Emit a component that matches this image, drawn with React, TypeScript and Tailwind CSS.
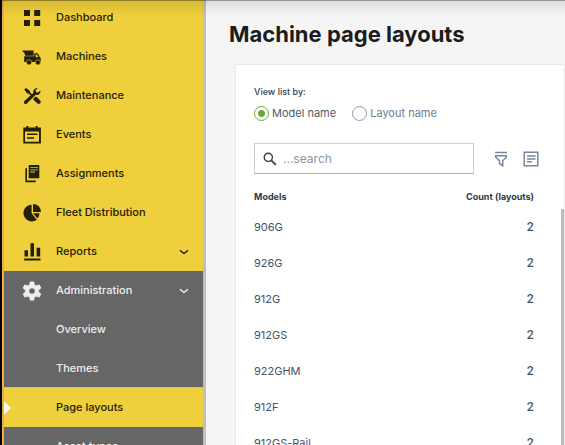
import { useState } from 'react'
import type { ReactNode } from 'react'

type NavItem = {
  label: string
  icon: ReactNode
  expandable?: boolean
}

function Icon({ children }: { children: ReactNode }) {
  return (
    <svg viewBox="0 0 20 20" className="w-5 h-5 shrink-0" fill="currentColor" aria-hidden="true">
      {children}
    </svg>
  )
}

const navItems: NavItem[] = [
  {
    label: 'Dashboard',
    icon: (
      <Icon>
        <path d="M2 2h6v6H2zM12.2 2h6v6h-6zM2 12h6v6H2zM12.2 12h6v6h-6z" />
      </Icon>
    ),
  },
  {
    label: 'Machines',
    icon: (
      <Icon>
        <path d="M.7 3.500h10.900v5.300H3.200L2.300 5.700.7 4.700z" />
        <path
          fillRule="evenodd"
          d="M2.200 9.200h10V6.200h3.600l2 4 .9.600v4.200H2.200zM13.700 7.600v2.600h2.600l-1.200-2.600z"
        />
        <circle cx="7" cy="15.300" r="2.600" className="stroke-[#efcf3b]" strokeWidth=".6" />
        <circle cx="15.900" cy="15.300" r="2.600" className="stroke-[#efcf3b]" strokeWidth=".6" />
      </Icon>
    ),
  },
  {
    label: 'Maintenance',
    icon: (
      <Icon>
        <path d="M2.300 3.400 4 2l3.800 2.700.2 1.600 3.200 3.200L9.900 10.800l-3.200-3.200-1.600-.2z" />
        <path d="M11.200 12.900 13.300 10.800l1.500.3 3.300 3.400c.9.900.9 2 0 2.800s-2 .9-2.800 0l-3.600-3.300z" />
        <path d="M2.400 15 11.400 7c-.6-2.900 1.400-5.300 4.400-5.100l-2.200 2.200.4 2.100 2.200.4 2.200-2.200c.4 3-1.900 5-4.700 4.400L4.900 17.500c-.8.800-1.800.8-2.500.1s-.8-1.800 0-2.600z" />
      </Icon>
    ),
  },
  {
    label: 'Events',
    icon: (
      <Icon>
        <path
          fillRule="evenodd"
          d="M1.300 2.500h3V1h2v1.500h7.400V1h2v1.500h3.200v15.900H1.300zM3 6.500v10.200h14V6.500z"
        />
        <path d="M5 8.600h10.500v1.500H5zM5 12.300h7v1.500H5z" />
      </Icon>
    ),
  },
  {
    label: 'Assignments',
    icon: (
      <Icon>
        <path
          fillRule="evenodd"
          d="M6.700 1h10.600v13.300H6.700zM8.300 3.200v.8h7.600v-.8zM8.300 5.400v.8h7.600v-.8zM8.300 7.600v.8h4.700v-.8z"
        />
        <path d="M3.400 4.300H5v12.300h8.700v1.600H3.400z" />
      </Icon>
    ),
  },
  {
    label: 'Fleet Distribution',
    icon: (
      <Icon>
        <path d="M9.600 1.800v8.500l5.200 6.400A8.300 8.300 0 1 1 9.600 1.800z" />
        <path d="M11 .9a8 8 0 0 1 8 8H11z" />
        <path d="M11 10.300h6.500a8 8 0 0 1-2 5.300z" />
      </Icon>
    ),
  },
  {
    label: 'Reports',
    expandable: true,
    icon: (
      <Icon>
        <path d="M2.500 8.300h3.500v6.200H2.500zM8.500 1.300h3.500v13.200H8.500zM14.600 5.800h3.600v8.700h-3.600zM2.200 16.400h16.300v2.100H2.200z" />
      </Icon>
    ),
  },
]

const adminItems = ['Overview', 'Themes', 'Page layouts', 'Asset types']

const models = [
  { name: '906G', count: 2 },
  { name: '926G', count: 2 },
  { name: '912G', count: 2 },
  { name: '912GS', count: 2 },
  { name: '922GHM', count: 2 },
  { name: '912F', count: 2 },
  { name: '912GS-Rail', count: 2 },
]

const gearAngles = [0, 60, 120, 180, 240, 300]

function GearIcon() {
  return (
    <Icon>
      <circle cx="10" cy="10" r="4.800" fill="none" stroke="currentColor" strokeWidth="4" />
      {gearAngles.map((angle) => (
        <path key={angle} d="M8 .4h4l1 4.400H7z" transform={`rotate(${angle} 10 10)`} />
      ))}
    </Icon>
  )
}

function Chevron() {
  return (
    <svg viewBox="0 0 10 6" className="w-[10px] h-[6px] ml-auto" fill="none" aria-hidden="true">
      <path d="M1 1.200Q3 3 5 4.500 7 3 9 1.200" stroke="currentColor" strokeWidth="1.500" />
    </svg>
  )
}

function Sidebar() {
  const [active, setActive] = useState('Page layouts')
  const [open, setOpen] = useState(true)

  return (
    <aside className="w-[206px] shrink-0 overflow-hidden border-l-2 border-black bg-[#efcf3b] border-r-[3px] border-r-[#bfbfc3]">
      <nav className="-mt-[2px] border-l-2 border-[#f0ab50] text-[11px] font-medium text-[#242008]">
        {navItems.map((item) => (
          <button key={item.label} className="flex items-center w-full h-[39px] pl-[18px] pr-[14px]">
            {item.icon}
            <span className="ml-[14px]">{item.label}</span>
            {item.expandable && <Chevron />}
          </button>
        ))}

        <div className="bg-[#666666] text-[#eeeeee]">
          <button
            onClick={() => setOpen(!open)}
            aria-expanded={open}
            className="flex items-center w-full h-[39px] pl-[18px] pr-[14px]"
          >
            <GearIcon />
            <span className="ml-[14px]">Administration</span>
            <Chevron />
          </button>

          {open &&
            adminItems.map((label) => (
              <a
                key={label}
                href="#"
                onClick={() => setActive(label)}
                className={
                  label === active
                    ? 'relative flex items-center h-[39px] pl-[52px] bg-[#efcf3b] text-[#242008] shadow-[0_-1px_0_#bfbfbf]'
                    : 'flex items-center h-[39px] pl-[52px]'
                }
              >
                {label === active && (
                  <svg viewBox="0 0 7 14" className="absolute left-0 w-[7px] h-[14px]" fill="#fffbe8" aria-hidden="true">
                    <path d="M0 0l7 7-7 7z" />
                  </svg>
                )}
                {label}
              </a>
            ))}
        </div>
      </nav>
    </aside>
  )
}

export default function App() {
  const [viewBy, setViewBy] = useState('model')
  const [search, setSearch] = useState('')

  const radioClass =
    'appearance-none w-[15px] h-[15px] rounded-full border border-[#8e9bb0] bg-white checked:border-[#6bab46] checked:bg-[radial-gradient(circle,#67a83c_3px,white_4px)]'

  return (
    <div className="relative flex h-screen overflow-hidden bg-[#f5f5f5] font-[Inter,sans-serif]">
      <div className="absolute inset-x-0 top-0 z-10 h-4 border-t border-black/40 bg-linear-to-b from-black/10 to-transparent pointer-events-none" />

      <Sidebar />

      <main className="flex flex-col flex-1 min-w-0 pt-[18px]">
        <h1 className="pl-[23px] text-[22px] leading-8 font-bold text-[#1c1c1c]">
          Machine page layouts
        </h1>

        <section className="relative flex-1 mt-[15px] ml-[30px] mr-px px-[18px] pt-5 bg-white shadow-[0_0_2px_rgba(0,0,0,0.15)]">
          <fieldset>
            <legend className="text-[9px] leading-[14px] font-medium text-[#334052]">
              View list by:
            </legend>
            <div className="flex gap-4 mt-[6px] text-[11px] leading-4">
              <label className="flex items-center gap-[3px] text-[#4f5b6c]">
                <input
                  type="radio"
                  name="view"
                  checked={viewBy === 'model'}
                  onChange={() => setViewBy('model')}
                  className={radioClass}
                />
                Model name
              </label>
              <label className="flex items-center gap-[3px] text-[#6f7b8f]">
                <input
                  type="radio"
                  name="view"
                  checked={viewBy === 'layout'}
                  onChange={() => setViewBy('layout')}
                  className={radioClass}
                />
                Layout name
              </label>
            </div>
          </fieldset>

          <div className="flex items-center mt-[22px] pr-[7px]">
            <label className="flex items-center flex-1 min-w-0 h-[31px] pl-2 border border-[#cbd0d9] border-b-[#a9b3c4]">
              <svg viewBox="0 0 14 14" className="w-[14px] h-[14px] shrink-0" fill="none" stroke="#323e50" aria-hidden="true">
                <circle cx="5.300" cy="5.300" r="4.100" strokeWidth="1.400" />
                <path d="M8.300 8.300l4.500 4.500" strokeWidth="1.800" />
              </svg>
              <input
                type="text"
                aria-label="Search models"
                placeholder="...search"
                value={search}
                onChange={(e) => setSearch(e.target.value)}
                className="flex-1 min-w-0 ml-[6px] text-[12px] text-[#4f5b6c] placeholder:text-[#8b95a6] outline-none"
              />
            </label>

            <button aria-label="Filter" className="ml-5">
              <svg viewBox="0 0 14 16" className="w-[14px] h-4" fill="none" stroke="#7886a0" strokeWidth="1.500" aria-hidden="true">
                <path d="M1 1.600h12M1.700 4.700h10.600v1.500L8.700 9.700v5L5.500 12.500V9.700L1.700 6.200z" />
              </svg>
            </button>
            <button aria-label="Layout details" className="ml-[15px]">
              <svg viewBox="0 0 16 16" className="w-4 h-4" fill="none" stroke="#7886a0" strokeWidth="1.500" aria-hidden="true">
                <path d="M1.200 1.200h13.600v13.600H1.200zM4 5h8.500M4 7.900h8.500M4 10.800h5" />
              </svg>
            </button>
          </div>

          <div className="mt-[11px] pr-3">
            <table className="w-full text-[#465366]">
              <thead>
                <tr className="h-6 text-[9px] font-semibold text-[#2d394a]">
                  <th className="text-left">Models</th>
                  <th className="text-right">Count (layouts)</th>
                </tr>
              </thead>
              <tbody>
                {models
                  .filter((m) => m.name.toLowerCase().includes(search.toLowerCase()))
                  .map((m) => (
                    <tr key={m.name} className="h-9 text-[11px]">
                      <td>{m.name}</td>
                      <td className="text-right text-[12px] font-medium">{m.count}</td>
                    </tr>
                  ))}
              </tbody>
            </table>
          </div>

          {/* scrollbar thumb of the model list */}
          <div className="absolute right-0 top-36 bottom-0 w-[3px] bg-[#bdbdbd]" />
        </section>
      </main>
    </div>
  )
}
